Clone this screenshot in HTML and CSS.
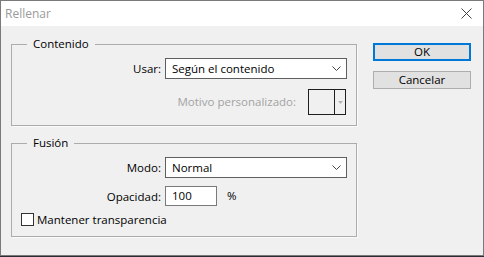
FILE: index.html
```html
<!DOCTYPE html>
<html lang="es">
<head>
  <meta charset="UTF-8" />
  <title>Rellenar</title>
  <link rel="stylesheet" href="styles.css">
</head>
<body>

  <div class="dialog">
    <!-- Title bar -->
    <div class="titlebar">
      <span class="title">Rellenar</span>
      <svg class="close" width="11" height="11" viewBox="0 0 11 11">
        <path d="M0.5 0.5 L10.5 10.5 M10.5 0.5 L0.5 10.5" stroke="#444" stroke-width="1" fill="none"/>
      </svg>
    </div>

    <div class="content">
      <div class="groups">
        <!-- Contenido -->
        <fieldset class="group">
          <legend>Contenido</legend>
          <div class="row">
            <span class="label">Usar:</span>
            <div class="select">
              <span>Según el contenido</span>
              <svg width="9" height="5" viewBox="0 0 9 5"><path d="M0.5 0.5 L4.5 4.5 L8.5 0.5" stroke="#444" fill="none"/></svg>
            </div>
          </div>
          <div class="row pattern-row">
            <span class="label disabled">Motivo personalizado:</span>
            <div class="pattern">
              <div class="pattern-swatch"></div>
              <div class="pattern-arrow">
                <svg width="5" height="3" viewBox="0 0 5 3"><path d="M0 0 L5 0 L2.5 3 Z" fill="#b4b4b4"/></svg>
              </div>
            </div>
          </div>
        </fieldset>

        <!-- Fusion -->
        <fieldset class="group">
          <legend>Fusión</legend>
          <div class="row">
            <span class="label">Modo:</span>
            <div class="select">
              <span>Normal</span>
              <svg width="9" height="5" viewBox="0 0 9 5"><path d="M0.5 0.5 L4.5 4.5 L8.5 0.5" stroke="#444" fill="none"/></svg>
            </div>
          </div>
          <div class="row">
            <span class="label">Opacidad:</span>
            <div class="opacity">
              <div class="input">100</div>
              <span class="unit">%</span>
            </div>
          </div>
          <div class="check">
            <span class="checkbox"></span>
            <span>Mantener transparencia</span>
          </div>
        </fieldset>
      </div>

      <!-- Buttons -->
      <div class="buttons">
        <button class="btn default">OK</button>
        <button class="btn">Cancelar</button>
      </div>
    </div>
  </div>

</body>
</html>
```

FILE: styles.css
```css
* {
  box-sizing: border-box;
  margin: 0;
  padding: 0;
}

body {
  background: #2a2d33;
  font-family: "Open Sans", "Noto Sans", sans-serif;
  font-size: 11.5px;
  line-height: 14px;
  color: #000;
}

.dialog {
  width: 484px;
  height: 256px;
  background: #f0f0f0;
  border: 1px solid #7a7a7a;
}

/* Title bar */
.titlebar {
  height: 25px;
  background: #fff;
  display: flex;
  align-items: center;
  justify-content: space-between;
  padding: 0 11px 0 4px;
}

.title {
  color: #9a9a9a;
  font-size: 12px;
}

/* Main area */
.content {
  display: flex;
  gap: 16px;
  padding: 11px 0 0 10px;
}

.groups {
  width: 346px;
  display: flex;
  flex-direction: column;
  gap: 10px;
}

.group {
  border: 1px solid #acacac;
  box-shadow: 1px 1px 0 #fafafa;
  padding: 7px 9px 10px 0;
  display: flex;
  flex-direction: column;
  gap: 10px;
}

.group legend {
  margin-left: 15px;
  padding: 0 6px;
  line-height: 14px;
}

.row {
  display: grid;
  grid-template-columns: 149px 182px;
  column-gap: 4px;
  align-items: center;
}

.label {
  text-align: right;
}

.label.disabled {
  color: #a3a3a3;
}

.select {
  height: 21px;
  background: #fff;
  border: 1px solid #5f5f5f;
  display: flex;
  align-items: center;
  justify-content: space-between;
  padding: 0 5px 0 6px;
}

/* Custom pattern picker */
.pattern-row {
  display: flex;
  justify-content: flex-end;
  gap: 12px;
  padding-right: 1px;
}

.pattern {
  width: 38px;
  height: 26px;
  border: 1px solid #1e1e1e;
  display: flex;
}

.pattern-swatch {
  flex: 1;
  border-right: 1px solid #1e1e1e;
}

.pattern-arrow {
  width: 10px;
  display: flex;
  align-items: center;
  justify-content: center;
}

/* Opacity field */
.opacity {
  display: flex;
  align-items: center;
  gap: 10px;
  margin-top: -2px;
}

.input {
  width: 52px;
  height: 20px;
  background: #fff;
  border: 1px solid #7a7a7a;
  padding-left: 6px;
  line-height: 18px;
}

/* Checkbox */
.check {
  display: flex;
  align-items: center;
  gap: 3px;
  padding-left: 9px;
  margin-top: -3px;
  line-height: 13px;
}

.checkbox {
  width: 13px;
  height: 13px;
  background: #fff;
  border: 1px solid #333;
}

/* Buttons */
.buttons {
  width: 98px;
  display: flex;
  flex-direction: column;
  gap: 10px;
  padding-top: 6px;
}

.btn {
  height: 18px;
  background: #e1e1e1;
  border: 1px solid #adadad;
  font-family: inherit;
  font-size: 11.5px;
  line-height: 14px;
  color: #000;
}

.btn.default {
  border: 2px solid #0078d7;
}
```
